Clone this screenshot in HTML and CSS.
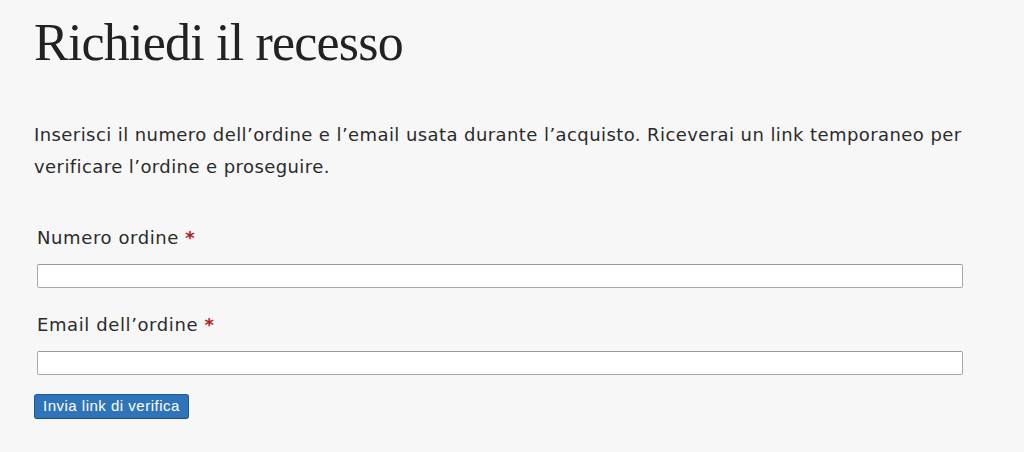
FILE: index.html
```html
<!DOCTYPE html>
<html lang="it">
  <head>
    <meta charset="UTF-8">
    <meta name="viewport" content="width=device-width, initial-scale=1.0">
    <title>Richiedi il recesso</title>
    <link rel="stylesheet" href="styles.css">
  </head>
  <body>
    <div class="page">
      <h1>Richiedi il recesso</h1>
      <p class="intro">Inserisci il numero dell’ordine e l’email usata durante l’acquisto. Riceverai un link temporaneo per verificare l’ordine e proseguire.</p>
      <form class="recesso-form" onsubmit="return false;">
        <div class="field">
          <label for="orderNumber">Numero ordine <span class="required">*</span></label>
          <input type="text" id="orderNumber">
        </div>
        <div class="field">
          <label for="orderEmail">Email dell’ordine <span class="required">*</span></label>
          <input type="email" id="orderEmail">
        </div>
        <button type="submit">Invia link di verifica</button>
      </form>
    </div>
  </body>
</html>
```

FILE: styles.css
```css
html, body {
  margin: 0;
  padding: 0;
}

body {
  background-color: #f7f7f7;
  color: #2b2b2b;
  font-family: "DejaVu Sans", Inter, sans-serif;
}

.page {
  padding: 11px 30px 0 34px;
}

h1 {
  font-family: "Liberation Serif", serif;
  font-weight: normal;
  font-size: 52px;
  letter-spacing: -0.8px;
  line-height: 64px;
  color: #222;
  margin: 0 0 44px 0;
}

.intro {
  font-size: 18px;
  letter-spacing: 0.42px;
  line-height: 32px;
  margin: 0 0 43px 0;
}

.recesso-form {
  padding-left: 3px;
}

.field {
  margin-bottom: 25px;
}

.field label {
  display: block;
  font-size: 18px;
  letter-spacing: 0.6px;
  line-height: 24px;
  margin-bottom: 14px;
}

.required {
  color: #b01c1c;
  font-weight: bold;
}

.field input {
  display: block;
  width: 926px;
  height: 24px;
  box-sizing: border-box;
  border: 1px solid #a9a9a9;
  border-top-color: #999;
  border-radius: 2px;
  background-color: #fff;
  padding: 2px 4px;
  font-size: 14px;
}

.field:last-of-type {
  margin-bottom: 19px;
}

button {
  margin-left: -3px;
  padding: 3px 8px 4px;
  background-color: #2f74b8;
  color: #fff;
  border: 1px solid #1f5a96;
  border-bottom-color: #1b4a7c;
  border-radius: 3px;
  font-family: "Liberation Sans", Arial, sans-serif;
  font-size: 15px;
  letter-spacing: 0.5px;
  line-height: 16px;
  cursor: pointer;
}
```
